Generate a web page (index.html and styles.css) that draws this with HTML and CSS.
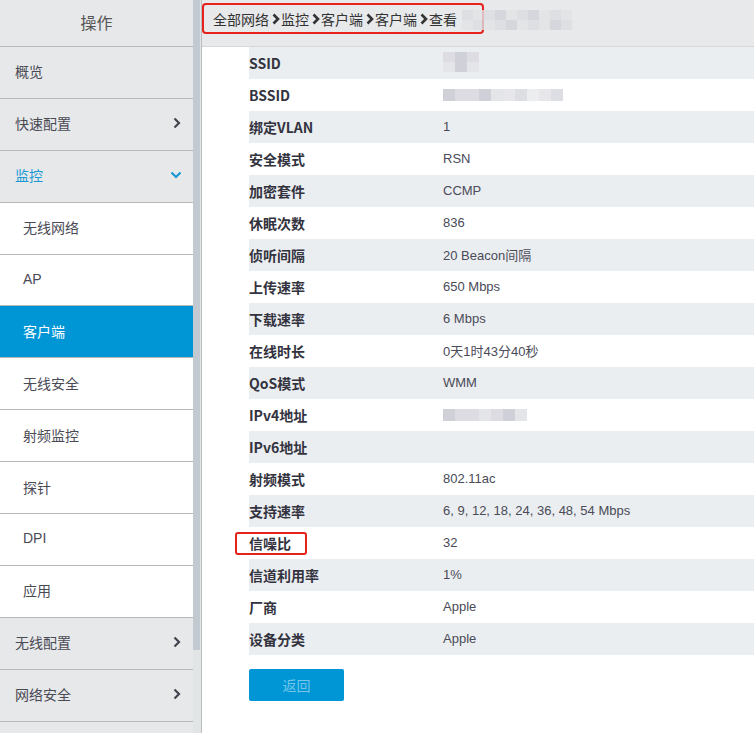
FILE: index.html
```html
<!DOCTYPE html>
<html lang="zh-CN">
<head>
<meta charset="utf-8">
<title>客户端 - 查看</title>
<link rel="stylesheet" href="styles.css">
</head>
<body>
<div class="app">
  <aside class="sidebar">
    <nav class="menu">
      <div class="menu-head">操作</div>
      <div class="item">概览</div>
      <div class="item">快速配置<svg class="chev" width="8" height="12" viewBox="0 0 8 12"><path d="M1.5 1.5 L6 6 L1.5 10.5" fill="none" stroke="#454552" stroke-width="2.2"/></svg></div>
      <div class="item open">监控<svg class="chev-down" width="12" height="8" viewBox="0 0 12 8"><path d="M1.5 1.5 L6 6 L10.5 1.5" fill="none" stroke="#1a98d5" stroke-width="2.2"/></svg></div>
      <div class="sub">无线网络</div>
      <div class="sub">AP</div>
      <div class="sub active">客户端</div>
      <div class="sub">无线安全</div>
      <div class="sub">射频监控</div>
      <div class="sub">探针</div>
      <div class="sub">DPI</div>
      <div class="sub">应用</div>
      <div class="item">无线配置<svg class="chev" width="8" height="12" viewBox="0 0 8 12"><path d="M1.5 1.5 L6 6 L1.5 10.5" fill="none" stroke="#454552" stroke-width="2.2"/></svg></div>
      <div class="item">网络安全<svg class="chev" width="8" height="12" viewBox="0 0 8 12"><path d="M1.5 1.5 L6 6 L1.5 10.5" fill="none" stroke="#454552" stroke-width="2.2"/></svg></div>
      <div class="item"></div>
    </nav>
    <div class="scrollbar"><div class="thumb"></div></div>
  </aside>
  <main class="main">
    <div class="crumbbar">
      <div class="crumb">
        <span>全部网络</span><svg class="sep" width="8" height="12" viewBox="0 0 8 12"><path d="M1.5 1.5 L6 6 L1.5 10.5" fill="none" stroke="#333" stroke-width="2.6"/></svg>
        <span>监控</span><svg class="sep" width="8" height="12" viewBox="0 0 8 12"><path d="M1.5 1.5 L6 6 L1.5 10.5" fill="none" stroke="#333" stroke-width="2.6"/></svg>
        <span>客户端</span><svg class="sep" width="8" height="12" viewBox="0 0 8 12"><path d="M1.5 1.5 L6 6 L1.5 10.5" fill="none" stroke="#333" stroke-width="2.6"/></svg>
        <span>客户端</span><svg class="sep" width="8" height="12" viewBox="0 0 8 12"><path d="M1.5 1.5 L6 6 L1.5 10.5" fill="none" stroke="#333" stroke-width="2.6"/></svg>
        <span>查看</span>
      </div>
      <div class="mosaic crumb-mosaic">
        <i class="m1"></i><i class="m2"></i><i class="m1"></i><i class="m3"></i><i class="m2"></i><i class="m1"></i><i class="m3"></i><i class="m2"></i><i class="m1"></i><i class="m2"></i>
        <i class="m2"></i><i class="m1"></i><i class="m2"></i><i class="m1"></i><i class="m3"></i><i class="m2"></i><i class="m1"></i><i class="m2"></i><i class="m3"></i><i class="m1"></i>
      </div>
    </div>
    <div class="content">
      <table class="info">
        <tr><th>SSID</th><td><span class="blur blur-ssid"><i class="b1"></i><i class="b2"></i><i class="b1"></i><i class="b3"></i><i class="b2"></i><i class="b3"></i></span></td></tr>
        <tr><th>BSSID</th><td><span class="blur blur-bssid"><i class="b2"></i><i class="b1"></i><i class="b1"></i><i class="b2"></i><i class="b3"></i><i class="b1"></i><i class="b2"></i><i class="b3"></i><i class="b1"></i><i class="b2"></i></span></td></tr>
        <tr><th>绑定VLAN</th><td>1</td></tr>
        <tr><th>安全模式</th><td>RSN</td></tr>
        <tr><th>加密套件</th><td>CCMP</td></tr>
        <tr><th>休眠次数</th><td>836</td></tr>
        <tr><th>侦听间隔</th><td>20 Beacon间隔</td></tr>
        <tr><th>上传速率</th><td>650 Mbps</td></tr>
        <tr><th>下载速率</th><td>6 Mbps</td></tr>
        <tr><th>在线时长</th><td>0天1时43分40秒</td></tr>
        <tr><th>QoS模式</th><td>WMM</td></tr>
        <tr><th>IPv4地址</th><td><span class="blur blur-ip"><i class="b2"></i><i class="b1"></i><i class="b1"></i><i class="b3"></i><i class="b1"></i><i class="b2"></i><i class="b3"></i></span></td></tr>
        <tr><th>IPv6地址</th><td></td></tr>
        <tr><th>射频模式</th><td>802.11ac</td></tr>
        <tr><th>支持速率</th><td>6, 9, 12, 18, 24, 36, 48, 54 Mbps</td></tr>
        <tr><th class="marked"><span class="mark-box"></span>信噪比</th><td>32</td></tr>
        <tr><th>信道利用率</th><td>1%</td></tr>
        <tr><th>厂商</th><td>Apple</td></tr>
        <tr><th>设备分类</th><td>Apple</td></tr>
      </table>
      <button class="back">返回</button>
    </div>
  </main>
</div>
</body>
</html>
```
FILE: styles.css
```css
* { box-sizing: border-box; }
html, body { margin: 0; padding: 0; }
body {
  width: 754px;
  height: 733px;
  overflow: hidden;
  font-family: "Liberation Sans", "Noto Sans CJK SC", sans-serif;
  color: #444;
  background: #fff;
}
.app { display: flex; height: 733px; }

.sidebar { display: flex; width: 201px; flex: none; height: 733px; }
.menu { width: 193px; height: 733px; overflow: hidden; background: #e6e8e9; }
.menu-head {
  height: 47px;
  border-bottom: 1px solid #b6b8ba;
  display: flex; align-items: center; justify-content: center;
  font-size: 16px; color: #555;
  padding-bottom: 2px;
}
.item, .sub {
  height: 51.9px;
  border-bottom: 1px solid #b6b8ba;
  display: flex; align-items: center; justify-content: space-between;
  font-size: 14px; color: #4a4a55;
  padding: 0 12px 2px 15px;
}
.item { background: #e6e8e9; }
.item.open { color: #1a98d5; }
.sub { background: #fff; padding-left: 23px; }
.sub.active { background: #0095d5; color: #fff; }
.chev-down { margin-right: -1px; }

.scrollbar { width: 8px; background: #e2e5e6; height: 733px; }
.thumb { width: 7px; height: 650px; background: #c2c9d0; }

.main { flex: 1; border-left: 1px solid #b9bdc0; min-width: 0; position: relative; }
.crumbbar {
  height: 47px;
  background: #e7e9ea;
  border-bottom: 1px solid #d6d9db;
  padding-top: 3px;
  position: relative;
}
.crumb {
  display: inline-flex; align-items: center;
  height: 31px;
  width: 282px;
  border: 2px solid #e5231c;
  border-radius: 4px;
  padding-left: 9px;
  font-size: 14px; color: #333;
  font-family: "Noto Sans CJK SC", sans-serif;
}
.sep { margin: 0 1px 0 3px; }
.mosaic { position: absolute; display: grid; grid-template-columns: repeat(10, 11px); grid-auto-rows: 10px; }
.crumb-mosaic { left: 260px; top: 10px; opacity: 0.8; }
.mosaic i { display: block; }
.m1 { background: #dcdde1; }
.m2 { background: #e2e3e5; }
.m3 { background: #d2d3d9; }

.content { padding: 0 0 0 47px; }
.info { border-collapse: collapse; width: 505px; }
.info tr { height: 32px; }
.info tr:nth-child(odd) { background: #ebeef0; }
.info th {
  width: 194px; padding: 0 0 1px; text-align: left;
  font-size: 14px; font-weight: bold; color: #333340;
  font-family: "Noto Sans CJK SC", sans-serif;
}
.info td {
  padding: 0 0 2px; font-size: 13px; color: #4a4a58;
  font-family: "Liberation Sans", "Noto Sans CJK SC", sans-serif;
}
.marked { position: relative; }
.mark-box {
  position: absolute; left: -14px; top: 5px;
  width: 72px; height: 23px;
  border: 2px solid #e5231c; border-radius: 3px;
}
.blur { display: inline-grid; vertical-align: middle; grid-auto-rows: 10px; }
.blur i { display: block; }
.blur-ssid { grid-template-columns: repeat(3, 12px); }
.blur-bssid { grid-template-columns: repeat(10, 12px); grid-auto-rows: 12px; }
.blur-bssid i:nth-child(n+6) { opacity: 0.7; }
.blur-ip { grid-template-columns: repeat(7, 12px); grid-auto-rows: 12px; }
.b1 { background: #dcdce2; }
.b2 { background: #cfd0d8; }
.b3 { background: #e4e5e8; }

.back {
  display: block;
  margin-top: 14px;
  width: 95px; height: 32px;
  background: #0096d6;
  border: none; border-radius: 2px;
  color: #74c6ea;
  font-size: 14px;
  font-family: "Noto Sans CJK SC", sans-serif;
  padding: 0;
}
```
